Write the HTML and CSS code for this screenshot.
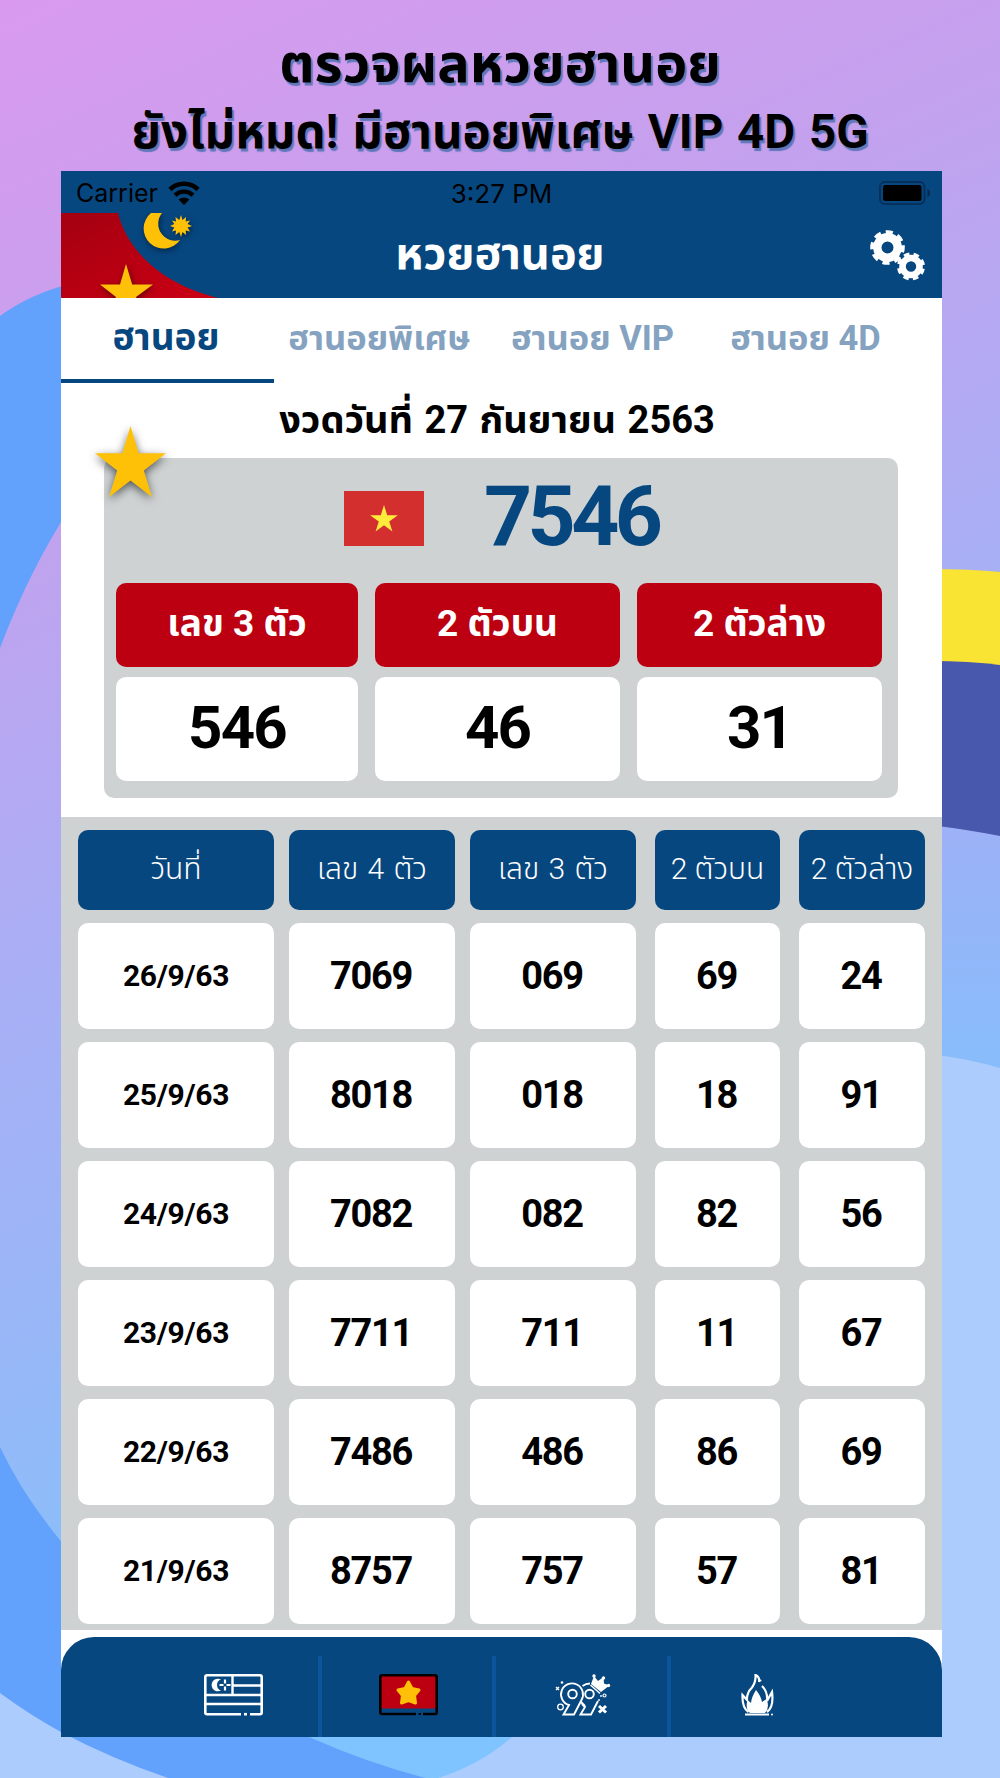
FILE: index.html
```html
<!DOCTYPE html>
<html lang="th">
<head>
  <meta charset="UTF-8" />
  <meta name="viewport" content="width=device-width, initial-scale=1.0" />
  <title>หวยฮานอย</title>
  <link rel="stylesheet" href="styles.css">
</head>
<body>

  <svg class="backdrop" viewBox="0 0 1000 1778" aria-hidden="true">
    <path d="M0 316Q30 294 70 284V508Q30 569 0 648Z" fill="#62a1fc"/>
    <path d="M0 1447Q25 1500 70 1552L440 1700V1778H0Z" fill="#62a1fc"/>
    <path d="M0 1693Q30 1715 61 1732Q110 1758 168 1778H0Z" fill="#acccfe"/>
    <path d="M930 569Q970 569 1000 572V670H930Z" fill="#f9e333"/>
    <path d="M930 661Q970 661 1000 665V850H930Z" fill="#4858ac"/>
    <path d="M930 825Q970 830 1000 836V1080H930Z" fill="url(#side)"/>
    <path d="M930 1054Q970 1059 1000 1068V1778H430L520 1700H930Z" fill="#acccfe"/>
    <path d="M260 1700L309 1737Q365 1762 425 1778H438Q480 1765 512 1737L540 1700Z" fill="#7fc4ff"/>
    <defs>
      <linearGradient id="side" x1="0" y1="0" x2="0" y2="1">
        <stop offset="0" stop-color="#9db1f7"/>
        <stop offset="1" stop-color="#86bdfb"/>
      </linearGradient>
    </defs>
  </svg>

  <h1 class="promo">
    <span class="promo-top">ตรวจผลหวยฮานอย</span>
    <span class="promo-bottom">ยังไม่หมด! มีฮานอยพิเศษ VIP 4D 5G</span>
  </h1>

  <main class="phone">
    <div class="status-bar">
      <div class="carrier">
        <span>Carrier</span>
        <svg width="32" height="24" viewBox="0 0 32 24">
          <path d="M2 8.5A20 20 0 0 1 30 8.5" fill="none" stroke="#000" stroke-width="4.6"/>
          <path d="M7 14.2A13 13 0 0 1 25 14.2" fill="none" stroke="#000" stroke-width="4.4"/>
          <path d="M10.6 18.6Q16 14.4 21.4 18.6L16 24Z"/>
        </svg>
      </div>
      <span class="time">3:27 PM</span>
      <svg class="battery" width="52" height="24" viewBox="0 0 52 24">
        <rect x="1" y="1" width="44.500" height="22" rx="5" fill="none" stroke="#04305b" stroke-width="2"/>
        <rect x="4" y="4" width="38.500" height="16" rx="2.500"/>
        <path d="M48.500 8Q51 9 51 12T48.500 16Z" fill="#04284d"/>
      </svg>
    </div>

    <header class="app-header">
      <svg class="corner-art" width="180" height="85" viewBox="0 0 180 85">
        <defs>
          <linearGradient id="red" x1="0" y1="0" x2="1" y2="1">
            <stop offset="0" stop-color="#a30010"/>
            <stop offset="1" stop-color="#cc0014"/>
          </linearGradient>
        </defs>
        <path d="M0 0H57C66 36 98 70 157 85H0Z" fill="url(#red)"/>
        <g class="shadowed" fill="#ffc107">
          <path d="M90 0A20 20 0 1 0 119 27A17 17 0 0 1 101 0Z"/>
          <path d="M120 2L121.500 7L125 4L124.700 8.500L129 7.500L126.500 11L131 13L126.500 14.500L129 18.500L124.700 17.500L125 22L121.500 19L120 24L118.300 19L114.500 22L115 17.500L111 18.500L113.300 14.500L109 13L113.300 11L111 7.500L115 8.500L114.500 4L118.300 7Z"/>
          <path d="M65 51L71.200 71.500H92L75 84L81 104L65 92L49 104L55 84L39 71.500H59Z"/>
        </g>
      </svg>
      <h2>หวยฮานอย</h2>
      <svg class="gears" width="58" height="54" viewBox="0 0 58 54">
        <g fill="none" stroke="#fff">
          <circle cx="18.500" cy="18.500" r="10.200" stroke-width="8.400"/>
          <circle cx="18.500" cy="18.500" r="15" stroke-width="4.600" stroke-dasharray="6.800 4.980" transform="rotate(-8 18.500 18.500)"/>
          <circle cx="42" cy="37.500" r="8.500" stroke-width="6.600"/>
          <circle cx="42" cy="37.500" r="12" stroke-width="4" stroke-dasharray="5.400 4.025" transform="rotate(10 42 37.500)"/>
        </g>
      </svg>
    </header>

    <nav class="tabs">
      <a class="tab active"><span>ฮานอย</span></a>
      <a class="tab"><span>ฮานอยพิเศษ</span></a>
      <a class="tab"><span>ฮานอย VIP</span></a>
      <a class="tab"><span>ฮานอย 4D</span></a>
    </nav>

    <section class="latest">
      <h3>งวดวันที่ 27 กันยายน 2563</h3>
      <div class="card">
        <svg class="card-star" viewBox="2 0 96 91" preserveAspectRatio="none">
          <path d="M50 0L61 35H98L68 57L79 91L50 70L21 91L32 57L2 35H39Z" fill="#ffc107"/>
        </svg>
        <div class="main-number">
          <svg width="80" height="55" viewBox="0 0 80 55">
            <rect width="80" height="55" fill="#d32f2f"/>
            <path transform="translate(25.500 14) scale(.29)" d="M50 0L61 35H98L68 57L79 91L50 70L21 91L32 57L2 35H39Z" fill="#ffeb3b"/>
          </svg>
          <strong>7546</strong>
        </div>
        <div class="prizes">
          <div class="label">เลข 3 ตัว</div>
          <div class="label">2 ตัวบน</div>
          <div class="label">2 ตัวล่าง</div>
          <div class="value">546</div>
          <div class="value">46</div>
          <div class="value">31</div>
        </div>
      </div>
    </section>

    <section class="history">
      <div class="row head">
        <div>วันที่</div><div>เลข 4 ตัว</div><div>เลข 3 ตัว</div><div>2 ตัวบน</div><div>2 ตัวล่าง</div>
      </div>
      <div class="row">
        <div>26/9/63</div><div>7069</div><div>069</div><div>69</div><div>24</div>
      </div>
      <div class="row">
        <div>25/9/63</div><div>8018</div><div>018</div><div>18</div><div>91</div>
      </div>
      <div class="row">
        <div>24/9/63</div><div>7082</div><div>082</div><div>82</div><div>56</div>
      </div>
      <div class="row">
        <div>23/9/63</div><div>7711</div><div>711</div><div>11</div><div>67</div>
      </div>
      <div class="row">
        <div>22/9/63</div><div>7486</div><div>486</div><div>86</div><div>69</div>
      </div>
      <div class="row">
        <div>21/9/63</div><div>8757</div><div>757</div><div>57</div><div>81</div>
      </div>
    </section>

    <footer class="bottom-nav">
      <a>
        <svg width="60" height="42" viewBox="0 0 60 42" fill="none" stroke="#fff" stroke-width="2.600">
          <path d="M37 40.200H3Q1.300 40.200 1.300 38.500V3Q1.300 1.300 3 1.300H56Q57.700 1.300 57.700 3V38.500Q57.700 40.200 56 40.200H46"/>
          <path d="M1.300 21H57.700M28.500 1.300V21M28.500 11.500H57.700M1.300 30H57.700" stroke-width="2.400"/>
          <path d="M40 40.200H43"/>
          <path d="M17 5.500A6.300 6.300 0 1 0 17 16.500A5.800 5.800 0 0 1 17 5.500Z" fill="#fff" stroke="none"/>
          <path d="M21 5.500V9.500M21 12.500V16.500M15.500 11H19.500M22.500 11H26.500" stroke-width="2.200"/>
        </svg>
      </a>
      <a>
        <svg width="60" height="42" viewBox="0 0 60 42">
          <rect x="2" y="2" width="55" height="32.500" fill="#bc0011"/>
          <path d="M37 40H3Q1.300 40 1.300 38.500V3Q1.300 1.300 3 1.300H56Q57.700 1.300 57.700 3V38.500Q57.700 40 56 40H44" fill="none" stroke="#000" stroke-width="2.600"/>
          <path d="M39.500 40H42" stroke="#000" stroke-width="2"/>
          <path d="M29.500 8L33 14.500L40 16L35.500 21.500L36.500 29L29.500 26.500L22.500 29L23.500 21.500L19 16L26 14.500Z" fill="#ffc107" stroke="#ffc107" stroke-width="3" stroke-linejoin="round"/>
        </svg>
      </a>
      <a>
        <svg width="56" height="42" viewBox="0 0 56 42" fill="none" stroke="#fff" stroke-width="1.900">
          <circle cx="17.500" cy="20" r="4.300"/>
          <path d="M8.500 40.500H19L26.500 26A11 11 0 1 0 14 31ZM26 28L30 32"/>
          <path d="M27 30L30 33L25.500 40.500H36L43 27M27.500 12Q31 9.500 35 9.500"/>
          <circle cx="34.500" cy="20" r="4.300"/>
          <circle cx="5.500" cy="33" r="2.800" stroke-width="1.300"/>
          <circle cx="49.500" cy="21.500" r="1.500" stroke-width="1.200"/>
          <path d="M36 10L39 2L43 7L48.500 3L49 9.500L54.500 11.500L46 18Z" fill="#fff" stroke="none"/>
          <path d="M35.500 11L45 19.500" stroke-width="1.500"/>
          <g fill="#fff" stroke="none">
            <circle cx="39" cy="2" r="1.700"/><circle cx="48.500" cy="4" r="1.700"/><circle cx="53.500" cy="11.500" r="1.700"/>
            <circle cx="7" cy="8.500" r="1.300"/><circle cx="46" cy="22" r=".9"/><circle cx="44" cy="26" r=".9"/>
          </g>
          <path d="M1 13L4 16M4 13L1 16" stroke-width="1.400"/>
          <path d="M44 32L51 38.500M51 32L44 38.500" stroke-width="3"/>
        </svg>
      </a>
      <a>
        <svg width="34" height="42" viewBox="0 0 34 42" fill="none" stroke="#fff" stroke-width="2.200">
          <path d="M7.500 38Q1 34 1.500 21L6 26Q5.500 19 11 13.500Q15 8 14.500 1Q19 3 18 8"/>
          <path d="M21 12Q27 18 26 27L31 18Q33 33 26 38"/>
          <path d="M9 39Q4 35 6.500 26L10 29Q10.500 23 15 16Q20 22 21 28L25.500 25Q29 34 24 39Z" fill="#fff" stroke="none"/>
          <path d="M4 40.500H28" stroke-width="2"/>
          <circle cx="31" cy="40.500" r="1" fill="#fff" stroke="none"/>
          <circle cx="19.500" cy="6.500" r="1" fill="#fff" stroke="none"/>
        </svg>
      </a>
    </footer>
  </main>

</body>
</html>
```
FILE: styles.css
```css
:root {
  --blue: #074780;
  --red: #bc0011;
  --grey: #ced2d3;
  --radius: 10px;
}

* {
  box-sizing: border-box;
}

body {
  position: relative;
  width: 1000px;
  height: 1778px;
  margin: 0;
  overflow: hidden;
  font-family: Roboto, "Noto Sans Thai", "Noto Sans", sans-serif;
  color: #000;
  background: linear-gradient(156deg, #d99aee 0%, #c3a1ee 23%, #a8aff5 45%, #98b7f7 61%, #8dbdf9 70%);
}

h1, h2, h3 {
  margin: 0;
}

.backdrop {
  position: absolute;
  inset: 0;
  z-index: -1;
}

.promo {
  height: 171px;
  padding-top: 29px;
  display: flex;
  flex-direction: column;
  align-items: center;
  font-size: 48px;
  line-height: 69px;
  white-space: nowrap;
  text-shadow: 2px 3px 1px #5f77b8;
}

.promo-top {
  font-size: 54px;
}

.promo-bottom {
  font-size: 47.500px;
  word-spacing: 2px;
}

.phone {
  display: flex;
  flex-direction: column;
  width: 881px;
  height: 1566px;
  margin-left: 61px;
  background: #fff;
}

.status-bar {
  height: 42px;
  padding: 2px 11px 0 15px;
  display: grid;
  grid-template-columns: 1fr auto 1fr;
  align-items: center;
  background: var(--blue);
  font-family: Inter, sans-serif;
  font-size: 25px;
}

.time {
  margin-right: 4px;
  font-size: 26px;
}

.carrier {
  display: flex;
  align-items: center;
  gap: 10px;
}

.battery {
  justify-self: end;
}

.app-header {
  height: 85px;
  display: grid;
  grid-template-columns: 180px 1fr 180px;
  align-items: center;
  background: var(--blue);
  color: #fff;
  text-align: center;
}

.app-header h2 {
  padding: 0 3px 4px 0;
  font-size: 45px;
  line-height: 81px;
}

.shadowed {
  filter: drop-shadow(1px 2px 3px rgba(0, 0, 0, 0.5));
}

.gears {
  justify-self: end;
  margin-right: 15px;
}

.tabs {
  display: flex;
  height: 85px;
}

.tab {
  width: 213px;
  padding: 1px 2px 0 0;
  display: flex;
  align-items: center;
  justify-content: center;
  border-bottom: 4px solid transparent;
  color: #85a3c0;
  font-size: 34.500px;
  font-weight: bold;
  white-space: nowrap;
}

.tab.active {
  padding-right: 3px;
  border-color: var(--blue);
  color: var(--blue);
  font-size: 37px;
}

.latest {
  height: 434px;
}

.latest h3 {
  height: 75px;
  padding-right: 9px;
  line-height: 75px;
  font-size: 38px;
  word-spacing: 2px;
  text-align: center;
  white-space: nowrap;
}

.card {
  position: relative;
  width: 794px;
  height: 340px;
  margin-left: 43px;
  padding: 0 17px 0 12px;
  border-radius: var(--radius);
  background: var(--grey);
}

.card-star {
  position: absolute;
  left: -9px;
  top: -32px;
  width: 71px;
  height: 71px;
  overflow: visible;
  filter: drop-shadow(0 3px 5px rgba(0, 0, 0, 0.6));
}

.main-number {
  height: 125px;
  padding: 0 0 4px 228px;
  display: flex;
  align-items: center;
  gap: 60px;
}

.main-number strong {
  margin-top: -4px;
  color: var(--blue);
  font-size: 84px;
  letter-spacing: -0.055em;
}

.prizes {
  display: grid;
  grid-template-columns: 242px 245px 245px;
  grid-template-rows: 84px 104px;
  gap: 10px 17px;
}

.label, .value {
  display: flex;
  align-items: center;
  justify-content: center;
  border-radius: var(--radius);
  font-weight: bold;
}

.label {
  background: var(--red);
  color: #fff;
  font-size: 37px;
}

.value {
  padding-bottom: 4px;
  background: #fff;
  font-size: 60px;
  letter-spacing: -0.03em;
}

.history {
  height: 813px;
  padding: 13px 16px 0 17px;
  display: flex;
  flex-direction: column;
  gap: 13px;
  background: var(--grey);
}

.row {
  height: 106px;
  flex: none;
  display: grid;
  grid-template-columns: 196px 166px 166px 129px 130px;
  column-gap: 15px;
}

.row div {
  padding: 0 2px 1px 0;
  display: flex;
  align-items: center;
  justify-content: center;
  border-radius: var(--radius);
  background: #fff;
  font-size: 38px;
  font-weight: bold;
  letter-spacing: -0.035em;
  white-space: nowrap;
}

.row div:nth-child(n + 4) {
  margin-left: 4px;
}

.row div:first-child {
  padding-right: 0;
  font-size: 30px;
  letter-spacing: -0.01em;
}

.row.head {
  height: 80px;
}

.row.head div,
.row.head div:first-child {
  padding: 0;
  background: var(--blue);
  color: #fff;
  font-size: 30px;
  font-weight: 300;
  letter-spacing: 0;
}

/* the two wide columns have room for looser words */
.row.head div:nth-child(2),
.row.head div:nth-child(3) {
  word-spacing: 2px;
}

.bottom-nav {
  height: 100px;
  margin-top: 7px;
  padding: 19px 82px 0 86px;
  display: flex;
  border-radius: 33px 33px 0 0;
  background: var(--blue);
}

.bottom-nav a {
  width: 174.500px;
  padding: 18px 0 0 4px;
  border-right: 4px solid #0b559b;
  text-align: center;
}

.bottom-nav a:last-child {
  border-right-color: transparent;
}
```
